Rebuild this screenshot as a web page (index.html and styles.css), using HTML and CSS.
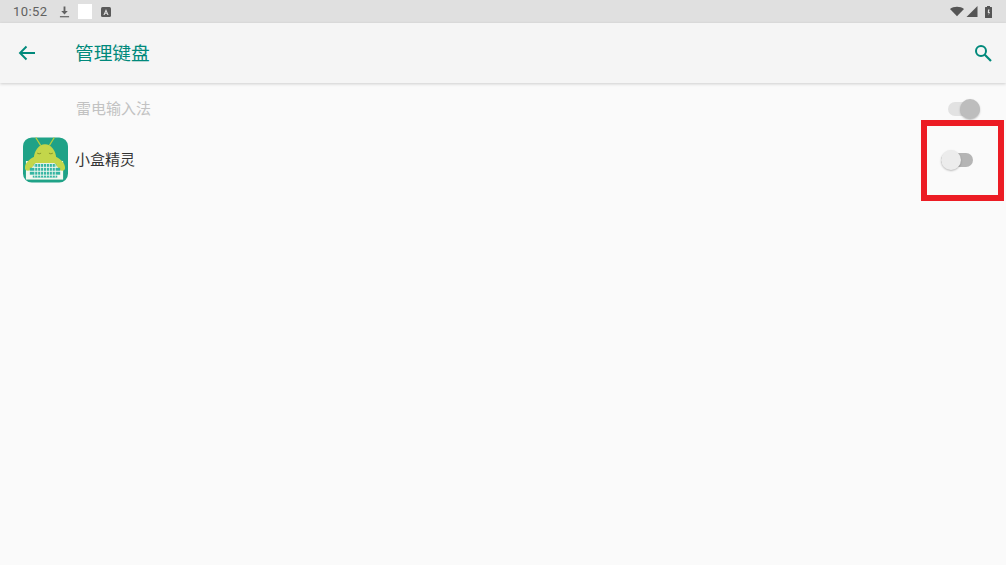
FILE: index.html
```html
<!DOCTYPE html>
<html lang="zh">
<head>
<meta charset="utf-8">
<title>管理键盘</title>
<link rel="stylesheet" href="styles.css">
</head>
<body>
<div class="status-bar">
  <div class="status-left">
    <span class="clock">10:52</span>
    <svg class="ic-download" width="11" height="14" viewBox="0 0 12 14"><path d="M5 1h2v5h2.600L6 9.800 2.400 6H5z" fill="#616161"/><rect x="1" y="11.500" width="10" height="1.300" fill="#616161"/></svg>
    <span class="white-square"></span>
    <svg class="ic-a" width="10" height="10" viewBox="0 0 10 10"><rect width="10" height="10" rx="1.500" fill="#5a5a5a"/><path d="M5 2 7.600 8H6.400L5.900 6.800H4.100L3.600 8H2.400zM4.500 5.800h1L5 4.400z" fill="#e0e0e0"/></svg>
  </div>
  <div class="status-right">
    <svg class="ic-wifi" width="14" height="11" viewBox="0 0 16 11"><path d="M0 2.500C2 .9 4.800 0 8 0s6 .9 8 2.500L8 11z" fill="#555"/></svg>
    <svg class="ic-signal" width="12" height="11" viewBox="0 0 12 12"><path d="M12 0V12H0z" fill="#555"/></svg>
    <svg width="7" height="12" viewBox="0 0 7 12"><path d="M2 0h3v1h1.500a.5.5 0 0 1 .5.500V11.500a.5.5 0 0 1-.5.500H.5a.5.5 0 0 1-.5-.5V1.500A.5.500 0 0 1 .5 1H2z" fill="#555"/><path d="M3 3.500h1.500L4 6h1L3.500 9.500 3.800 7H2.800z" fill="#e0e0e0"/></svg>
  </div>
</div>
<header class="app-bar">
  <svg class="back" width="18" height="16" viewBox="0 0 18 16"><path d="M17 8H2.500M8.500 1.500 2 8l6.500 6.500" fill="none" stroke="#00897b" stroke-width="1.900"/></svg>
  <h1 class="title">管理键盘</h1>
  <svg class="search" width="18" height="18" viewBox="0 0 18 18"><circle cx="7" cy="7" r="5" fill="none" stroke="#00897b" stroke-width="2"/><path d="M10.800 10.800 17 17" stroke="#00897b" stroke-width="2.200"/></svg>
</header>
<main class="list">
  <div class="row row-disabled">
    <span class="row-label muted">雷电输入法</span>
    <span class="switch switch-on"><span class="track"></span><span class="thumb"></span></span>
  </div>
  <div class="row row-app">
    <svg class="app-icon" width="45" height="46" viewBox="0 0 46 46">
      <rect width="46" height="46" rx="9" fill="#1fa287"/>
      <path d="M13 0l5 8M32 0l-5 8" stroke="#b9cf3a" stroke-width="1.300"/>
      <rect x="3" y="24" width="38" height="19" fill="#f4f8f0"/>
      <path d="M11 20C7 22 2 26 2 31q0 3 3 3 3 0 4-3l4-5h19l4 5q1 3 4 3 3 0 3-3c0-5-5-9-9-11z" fill="#c3d64a"/>
      <path d="M11 22a11.500 15 0 0 1 23 0v3H11z" fill="#c3d64a"/>
      <path d="M14.500 16q2 1.500 4 0M26.500 16q2 1.500 4 0" fill="none" stroke="#7d8f28" stroke-width=".9"/>
      <rect x="11" y="27" width="23" height="3" fill="#35b5a3"/>
      <rect x="7" y="31" width="31" height="3" fill="#35b5a3"/>
      <rect x="7" y="35" width="31" height="3" fill="#35b5a3"/>
      <rect x="10" y="39" width="25" height="2" fill="#35b5a3"/>
      <path d="M12 27v14M15 27v14M18 27v14M21 27v14M24 27v14M27 27v14M30 27v14M33 27v14" stroke="#f4f8f0" stroke-width=".8"/>
    </svg>
    <span class="row-label row-label-app">小盒精灵</span>
    <span class="switch switch-off"><span class="track"></span><span class="thumb"></span></span>
  </div>
</main>
<div class="highlight-box"></div>
</body>
</html>
```

FILE: styles.css
```css
* { box-sizing: border-box; }
html, body { margin: 0; height: 100%; }
body {
  background: #fafafa;
  font-family: "Roboto", "Noto Sans CJK SC", sans-serif;
  overflow: hidden;
  position: relative;
}
.status-bar {
  height: 23px;
  background: #e0e0e0;
  display: flex;
  align-items: center;
  justify-content: space-between;
  padding: 0 14px 0 13px;
}
.status-left, .status-right { display: flex; align-items: center; }
.clock { font-size: 13px; color: #616161; margin-right: 12px; letter-spacing: .4px; }
.ic-download { margin-right: 8px; }
.white-square { width: 14px; height: 15px; background: #fff; margin-right: 9px; }
.ic-wifi { margin-right: 2px; }
.ic-signal { margin-right: 7px; }
.app-bar {
  height: 60px;
  background: #f5f5f5;
  box-shadow: 0 1px 3px rgba(0,0,0,.18);
  display: flex;
  align-items: center;
  padding: 0 14px 0 18px;
  position: relative;
}
.back { margin-right: 40px; }
.title { margin: 0 0 0 -1px; padding-bottom: 4px; flex: 1; font-size: 18.700px; font-weight: 400; color: #00897b; }
.list { display: flex; flex-direction: column; padding-top: 8px; }
.row { display: flex; align-items: center; }
.row-disabled { height: 35px; padding-left: 76px; padding-right: 26px; margin-bottom: 9px; }
.row-app { height: 50px; padding-left: 23px; padding-right: 33px; }
.app-icon { margin-right: 7px; flex: none; }
.row-label { flex: 1; font-size: 15px; color: #333; padding-bottom: 2px; }
.row-label-app { padding-bottom: 4px; }
.muted { color: #c2c2c2; }
.switch { position: relative; display: block; width: 32px; height: 20px; }
.track { position: absolute; left: 0; right: 0; top: 3px; height: 14px; border-radius: 7px; }
.thumb { position: absolute; top: 0; width: 20px; height: 20px; border-radius: 50%; box-shadow: 0 1px 2px rgba(0,0,0,.25); }
.switch-on .track { background: #e2e2e2; }
.switch-on .thumb { right: 0; background: #bdbdbd; }
.switch-off .track { background: #b5b5b5; }
.switch-off .thumb { left: 0; background: #ececec; }
.highlight-box {
  position: absolute;
  left: 921px;
  top: 120px;
  width: 83px;
  height: 81px;
  border: 6px solid #ec1c24;
}
```
